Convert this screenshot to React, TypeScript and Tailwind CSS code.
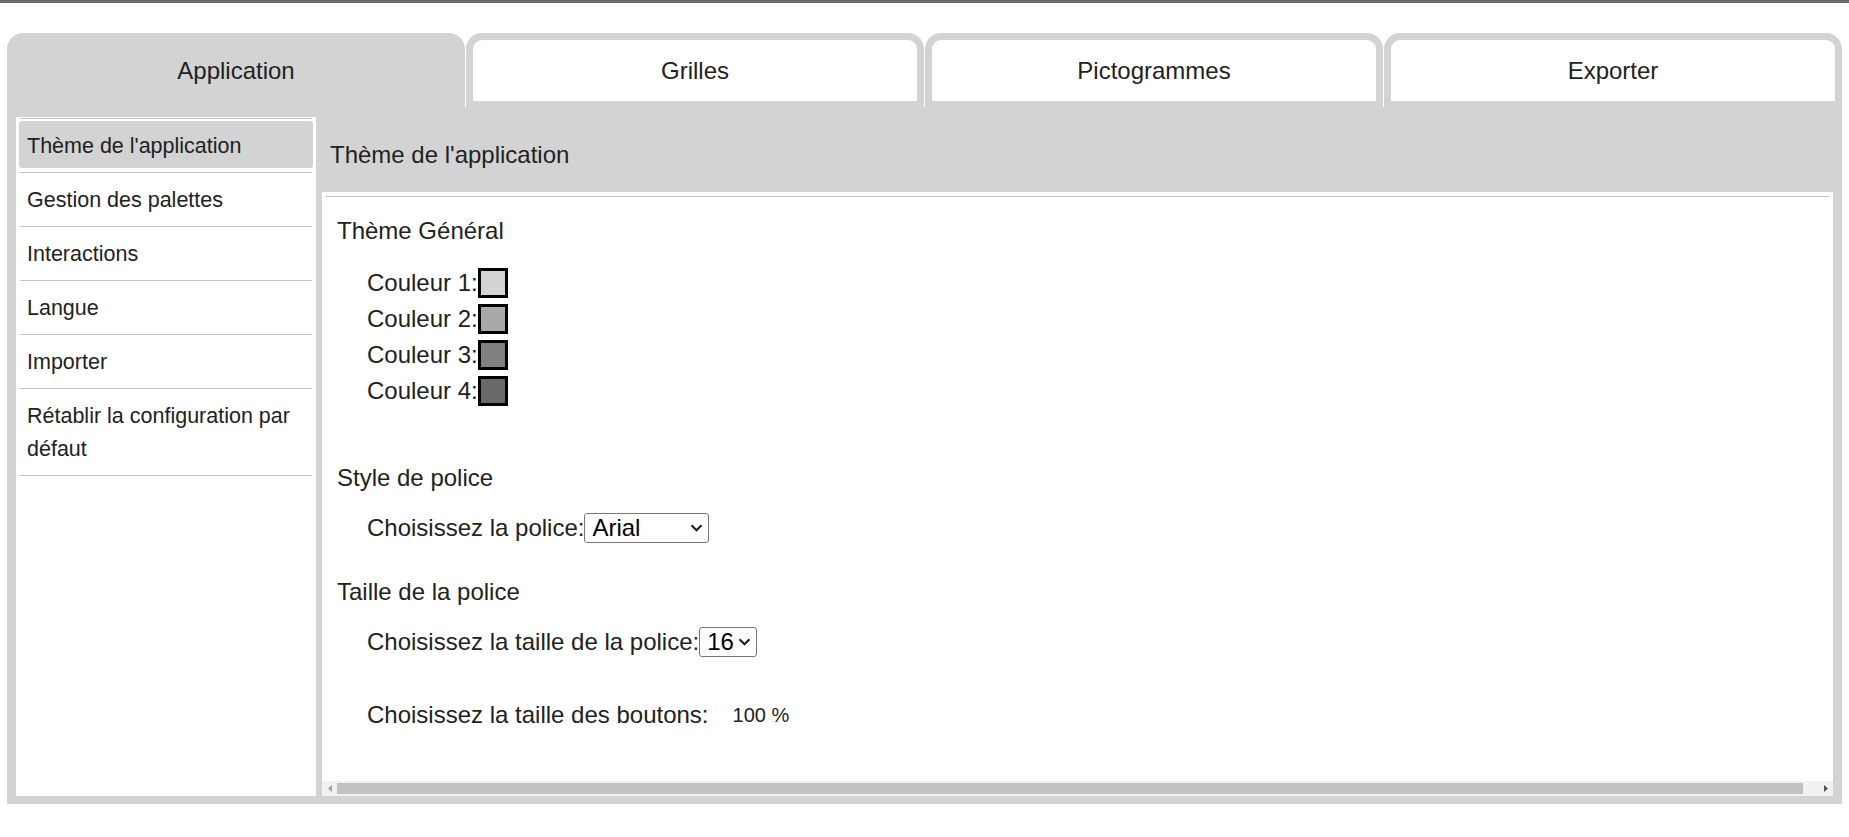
import * as React from 'react';

const TABS = ['Application', 'Grilles', 'Pictogrammes', 'Exporter'];

const MENU = [
    "Thème de l'application",
    'Gestion des palettes',
    'Interactions',
    'Langue',
    'Importer',
    'Rétablir la configuration par défaut',
];

const COLORS = ['#d3d3d3', '#a9a9a9', '#808080', '#696969'];

function Chevron() {
    return (
        <svg width="13" height="9" viewBox="0 0 13 9" className="pointer-events-none absolute top-1/2 -translate-y-1/2 right-[6px]">
            <path d="M1.5 1.8 L6.5 6.8 L11.5 1.8" fill="none" stroke="#222" strokeWidth="2.2" />
        </svg>
    );
}

function FakeSelect({ value, options, width }: { value: string; options: string[]; width: string }) {
    return (
        <span className={`relative inline-block ${width}`}>
            <select
                defaultValue={value}
                className="appearance-none w-full h-[30px] border border-[#767676] rounded-[3px] bg-white pl-[7px] pr-[22px] text-[24px] leading-[28px] text-black"
            >
                {options.map((o) => (
                    <option key={o} value={o}>{o}</option>
                ))}
            </select>
            <Chevron />
        </span>
    );
}

function Scrollbar() {
    return (
        <div className="h-[15px] bg-[#f1f1f1] flex items-stretch shrink-0">
            <div className="w-[15px] flex items-center justify-center">
                <svg width="4" height="7" viewBox="0 0 4 7"><path d="M4 0 L0 3.5 L4 7 Z" fill="#a3a3a3" /></svg>
            </div>
            <div className="flex-1 flex items-center pr-[15px]">
                <div className="h-[11px] w-full bg-[#c1c1c1]" />
            </div>
            <div className="w-[15px] flex items-center justify-center">
                <svg width="4" height="7" viewBox="0 0 4 7"><path d="M0 0 L4 3.5 L0 7 Z" fill="#505050" /></svg>
            </div>
        </div>
    );
}

export default function App() {
    const [tab, setTab] = React.useState(0);
    const [item, setItem] = React.useState(0);

    return (
        <div className="w-[1849px] h-[837px] bg-white text-[#222] font-['Liberation_Sans',Arial,sans-serif] overflow-hidden">
            <div className="h-[3px] bg-[#6b6b6b]" />

            <div className="mt-[30px] px-[7px]">
                <div className="grid grid-cols-4 gap-[1px]">
                    {TABS.map((label, i) => (
                        <button
                            key={label}
                            type="button"
                            onClick={() => setTab(i)}
                            className={`min-w-0 h-[74px] rounded-t-[16px] text-[24px] flex items-center justify-center border-[7px] border-b-[6px] border-[#d3d3d3] ${
                                i === tab ? 'bg-[#d3d3d3]' : 'bg-white'
                            }`}
                        >
                            {label}
                        </button>
                    ))}
                </div>

                <div className="h-[697px] bg-[#d3d3d3] pt-[10px] pl-[9px] pr-[9px] pb-[8px] flex gap-[6px]">
                    <div className="w-[300px] bg-white pt-[1px] px-[4px]">
                        <ul className="border-t border-[#c4c4c4]">
                            {MENU.map((label, i) => (
                                <li key={label} className="pt-[2px] pb-[4px] border-b border-[#c4c4c4]">
                                    <div
                                        onClick={() => setItem(i)}
                                        className={`-mx-[1px] pl-[8px] pr-[8px] pt-[9px] pb-[5px] text-[21.5px] leading-[33px] rounded-[3px] cursor-pointer ${
                                            i === item ? 'bg-[#d3d3d3]' : ''
                                        }`}
                                    >
                                        {label}
                                    </div>
                                </li>
                            ))}
                        </ul>
                    </div>

                    <div className="flex-1 flex flex-col min-w-0">
                        <div className="h-[75px] shrink-0 flex items-center pl-[8px] text-[24px]">
                            Thème de l'application
                        </div>
                        <div className="flex-1 bg-white flex flex-col min-h-0">
                            <div className="px-[4px] pt-[4px]">
                                <div className="border-t border-[#c4c4c4]" />
                            </div>
                            <div className="flex-1 pl-[15px] text-[24px] leading-[28px]">
                                <div className="mt-[20px]">Thème Général</div>
                                <div className="mt-[20px] pl-[30px]">
                                    {COLORS.map((c, i) => (
                                        <div key={c} className="h-[36px] flex items-center">
                                            <span>Couleur {i + 1}:</span>
                                            <span
                                                className="w-[30px] h-[30px] border-[3px] border-black"
                                                style={{ backgroundColor: c }}
                                            />
                                        </div>
                                    ))}
                                </div>

                                <div className="mt-[55px]">Style de police</div>
                                <div className="mt-[21px] pl-[30px] h-[30px] flex items-center">
                                    <span>Choisissez la police:</span>
                                    <FakeSelect value="Arial" options={['Arial', 'Verdana', 'Times New Roman']} width="w-[125px]" />
                                </div>

                                <div className="mt-[35px]">Taille de la police</div>
                                <div className="mt-[21px] pl-[30px] h-[30px] flex items-center">
                                    <span>Choisissez la taille de la police:</span>
                                    <FakeSelect value="16" options={['12', '14', '16', '18', '20']} width="w-[58px]" />
                                </div>

                                <div className="mt-[44px] pl-[30px] flex items-center">
                                    <span>Choisissez la taille des boutons:</span>
                                    <span className="ml-[24px] text-[20px]">100 %</span>
                                </div>
                            </div>
                            <Scrollbar />
                        </div>
                    </div>
                </div>
            </div>
        </div>
    );
}
